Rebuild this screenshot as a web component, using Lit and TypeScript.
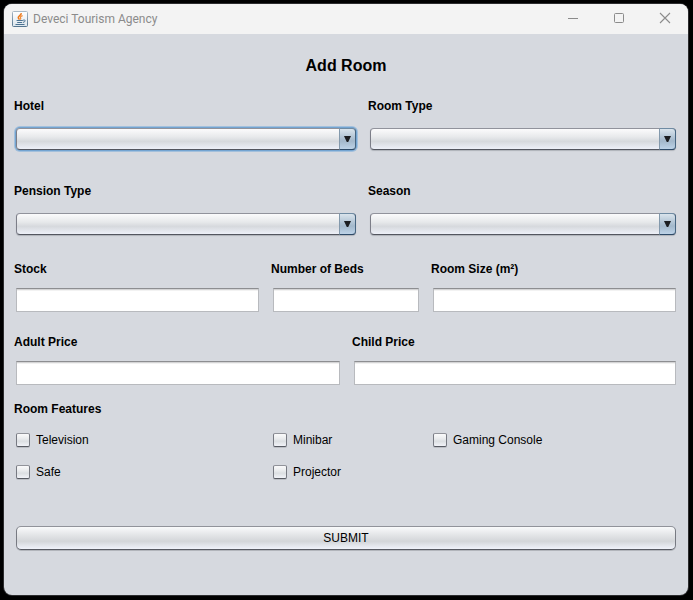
import { LitElement, html, css, svg } from "lit";
import { customElement, property } from "lit/decorators.js";

@customElement("title-bar")
class TitleBar extends LitElement {
  @property() caption = "";

  static styles = css`
    :host {
      display: flex;
      align-items: center;
      height: 30px;
      padding-left: 8px;
      box-sizing: border-box;
      background: #f3f3f3;
      color: #8b8b8b;
    }
    .caption {
      flex: 1;
      margin-left: 5px;
      font: 12px/16px Roboto, sans-serif;
      white-space: nowrap;
    }
    .logo {
      display: block;
      width: 16px;
      height: 16px;
    }
    .control {
      display: grid;
      place-items: center;
      width: 46px;
      height: 30px;
      padding: 0 0 2px;
      border: 0;
      background: none;
      color: inherit;
    }
    .control svg {
      display: block;
      width: 12px;
      height: 12px;
      fill: none;
      stroke: currentColor;
    }
  `;

  private control(label: string, shape: unknown) {
    return html`<button class="control" type="button" aria-label=${label}>
      <svg viewBox="0 0 12 12">${shape}</svg>
    </button>`;
  }

  render() {
    return html`
      <svg class="logo" viewBox="0 0 16 16" aria-hidden="true">
        <defs>
          <linearGradient id="frame" x1="0" y1="0" x2="0" y2="1">
            <stop offset="0" stop-color="#a9b9c6" />
            <stop offset="1" stop-color="#55758f" />
          </linearGradient>
          <linearGradient id="face" x1="0" y1="0" x2="0" y2="1">
            <stop offset="0" stop-color="#ffffff" />
            <stop offset="1" stop-color="#dce5ec" />
          </linearGradient>
        </defs>
        <rect x="0.5" y="0.5" width="15" height="15" rx="1" fill="url(#face)" stroke="url(#frame)" />
        <path d="M9.2 2.2C9.6 4.2 6 4.8 6.3 6.6C6.4 7.4 7.2 7.8 7.4 8.6" fill="none" stroke="#ee7a1c" stroke-width="1.6" />
        <path d="M10.6 4.6C8.6 5.2 8 6 8.6 6.9C9 7.5 8.8 8 8.3 8.5" fill="none" stroke="#f08a35" stroke-width="1.2" />
        <path d="M4.6 9.5H10.8M5.2 11.5H10.2M10.8 9.3C14 8.2 14 10.8 11 11.4" fill="none" stroke="#4b7291" />
        <path d="M3.5 13.5H12.5" fill="none" stroke="#4b7291" />
      </svg>
      <span class="caption">${this.caption}</span>
      ${this.control("Minimize", svg`<path d="M1 6.5H11" />`)}
      ${this.control("Maximize", svg`<rect x="1.5" y="1.5" width="9" height="9" rx="1" />`)}
      ${this.control("Close", svg`<path d="M1 1L11 11M11 1L1 11" stroke-width="1.1" />`)}
    `;
  }
}

@customElement("app-root")
class AppRoot extends LitElement {
  static styles = css`
    :host {
      display: flex;
      box-sizing: border-box;
      min-height: 100vh;
      padding: 4px 5px 5px 4px;
      background: #000;
      color: #000;
      font: 12px/16px "Liberation Sans", Arial, sans-serif;
    }
    .window {
      flex: 1;
      min-width: 0;
      border-radius: 8px;
      overflow: hidden;
      background: #d6d9df;
      box-shadow: 0 0 0 1px #2c2c2e;
    }
    form {
      padding: 20px 10px 24px;
    }
    h1 {
      margin: 0 0 20px;
      text-align: center;
      font-size: 16px;
      line-height: 24px;
    }
    .row {
      display: grid;
      column-gap: 10px;
    }
    .hotel {
      grid-template-columns: 344fr 310fr;
      margin-bottom: 32px;
    }
    .pension {
      grid-template-columns: 344fr 310fr;
      margin-bottom: 25px;
    }
    .thirds {
      grid-template-columns: 247fr 150fr 247fr;
    }
    .capacity {
      margin-bottom: 22px;
    }
    .price {
      grid-template-columns: 328fr 326fr;
      margin-bottom: 16px;
    }
    .field {
      display: flex;
      flex-direction: column;
      gap: 11px;
      min-width: 0;
    }
    .field.choice {
      gap: 14px;
    }
    .name {
      font-weight: bold;
    }
    .text {
      height: 24px;
      margin: 0 2px;
      padding: 0 6px;
      box-sizing: border-box;
      min-width: 0;
      border: 1px solid #b8babe;
      border-top-color: #8d8e91;
      background: #fff;
      box-shadow: inset 0 1px #d4d4d5, inset 0 2px #f2f2f2;
      font: inherit;
      outline: none;
    }
    .combo {
      display: grid;
      grid-template-columns: 1fr 17px;
      height: 22px;
      margin: 0 2px 1px;
      border-radius: 4px;
      box-shadow: 0 1px 1px #aeb2b9;
    }
    .combo select {
      grid-area: 1 / 1 / 2 / 3;
      appearance: none;
      width: 100%;
      min-width: 0;
      height: 22px;
      margin: 0;
      padding: 0 20px 0 6px;
      border: 1px solid #7c7e88;
      border-top-color: #91939c;
      border-bottom-color: #53565f;
      border-radius: 4px;
      background: linear-gradient(#fbfbfc, #e7e9eb 40%, #d6d9dd 62%, #edf0f8);
      font: inherit;
      outline: none;
    }
    .combo svg {
      grid-area: 1 / 2;
      width: 17px;
      height: 22px;
      box-sizing: border-box;
      border: 1px solid #466581;
      border-top-color: #6f8ba3;
      border-left-color: #8399ac;
      border-bottom-color: #2d4a68;
      border-radius: 0 4px 4px 0;
      background: linear-gradient(#dae4ec, #b4c6d6 40%, #a3b8cb 60%, #bdd3e8);
      pointer-events: none;
      z-index: 1;
    }
    .combo.active {
      box-shadow: 0 0 0 1px #73a4d1, 0 0 0 2px #a3c0dc;
    }
    .features {
      margin: 0;
      padding: 0;
      border: 0;
      min-width: 0;
    }
    .features legend {
      padding: 0;
      margin-bottom: 15px;
      font-weight: bold;
    }
    .features .row {
      row-gap: 16px;
    }
    .tick {
      display: flex;
      align-items: center;
      gap: 6px;
      margin-left: 2px;
    }
    .tick input {
      appearance: none;
      width: 14px;
      height: 14px;
      margin: 0;
      box-sizing: border-box;
      border: 1px solid #777a82;
      border-top-color: #91939a;
      border-bottom-color: #575a62;
      border-radius: 2px;
      background: linear-gradient(#fafafb, #e9ebed 40%, #dcdfe2 60%, #f1f3f8);
      box-shadow: 0 1px #bbbec4;
    }
    .tick input:checked {
      background: #5a7b99;
    }
    .submit {
      display: block;
      width: calc(100% - 4px);
      height: 24px;
      margin: 46px 2px 0;
      padding: 0;
      border: 1px solid #777a82;
      border-top-color: #91939a;
      border-bottom-color: #575a62;
      border-radius: 5px;
      background: linear-gradient(#f9fafb, #e4e6e8 35%, #d3d6d9 65%, #f0f3fb);
      box-shadow: 0 1px #b2b5bb;
      color: #000;
      font: inherit;
    }
  `;

  private combo(id: string, label: string, active = false) {
    return html`<div class="field choice">
      <label class="name" for=${id}>${label}</label>
      <div class="combo ${active ? "active" : ""}">
        <select id=${id}><option></option></select>
        <svg viewBox="0 0 15 20" aria-hidden="true">
          <path d="M4 7H11L8.2 13H6.8Z" fill="#1c1e21" />
        </svg>
      </div>
    </div>`;
  }

  private text(id: string, label: string) {
    return html`<div class="field">
      <label class="name" for=${id}>${label}</label>
      <input class="text" type="text" id=${id} />
    </div>`;
  }

  private tick(label: string) {
    return html`<label class="tick"><input type="checkbox" />${label}</label>`;
  }

  render() {
    return html`
      <main class="window">
        <title-bar caption="Deveci Tourism Agency"></title-bar>
        <form @submit=${(e: Event) => e.preventDefault()}>
          <h1>Add Room</h1>
          <div class="row hotel">
            ${this.combo("hotel", "Hotel", true)} ${this.combo("room-type", "Room Type")}
          </div>
          <div class="row pension">
            ${this.combo("pension", "Pension Type")} ${this.combo("season", "Season")}
          </div>
          <div class="row thirds capacity">
            ${this.text("stock", "Stock")} ${this.text("beds", "Number of Beds")}
            ${this.text("size", "Room Size (m²)")}
          </div>
          <div class="row price">
            ${this.text("adult", "Adult Price")} ${this.text("child", "Child Price")}
          </div>
          <fieldset class="features">
            <legend>Room Features</legend>
            <div class="row thirds">
              ${["Television", "Minibar", "Gaming Console", "Safe", "Projector"].map((f) => this.tick(f))}
            </div>
          </fieldset>
          <button class="submit" type="submit">SUBMIT</button>
        </form>
      </main>
    `;
  }
}
